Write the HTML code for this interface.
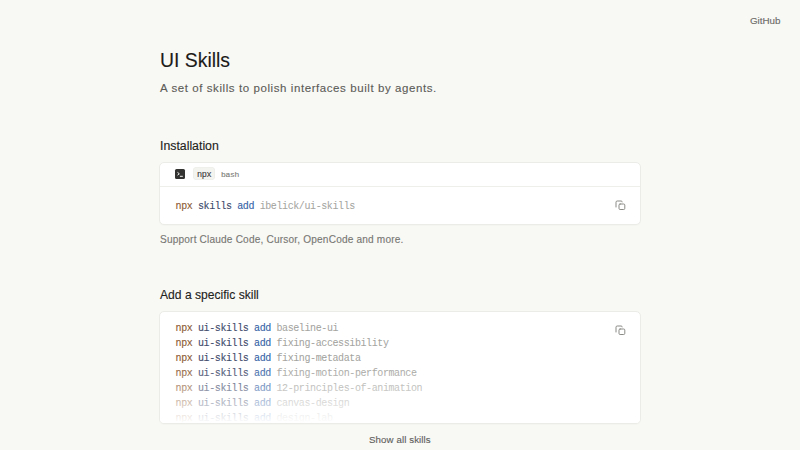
<!DOCTYPE html>
<html>
<head>
<meta charset="utf-8">
<style>
*{margin:0;padding:0;box-sizing:border-box}
html,body{width:800px;height:450px;overflow:hidden;background:#f8f8f5}
body{font-family:"Liberation Sans",sans-serif;color:#1c1c1a;position:relative;-webkit-text-stroke:.12px}
.t{position:absolute;white-space:nowrap;line-height:1}
.mono{font-family:"Liberation Mono",monospace}
.gh{left:750px;top:16px;font-size:9.8px;color:#6b6b66}
.title{left:160px;top:50.5px;font-size:19.4px;color:#1c1b18}
.sub{left:160px;top:83px;font-size:11.5px;letter-spacing:.58px;color:#5c5c57}
.h2{font-size:12.3px;color:#232320}
.card{position:absolute;left:159px;width:482px;background:#fff;border:1px solid #ebebe7;border-radius:5px;overflow:hidden;box-shadow:0 1px 1px rgba(0,0,0,.02)}
.hdr{position:absolute;left:0;top:0;width:100%;height:24px;border-bottom:1px solid #eeeeea}
.term{position:absolute;left:15px;top:6px;width:10px;height:10.4px;background:#333331;border-radius:1.5px}
.pill{position:absolute;left:33px;top:4px;width:22px;height:13px;border-radius:4px;background:#f3f3f0;box-shadow:inset 0 0 0 .6px #ebebe7}
.code{font-size:10px;letter-spacing:-.4px;-webkit-text-stroke:.12px}
.n{color:#8c5a34}.s{color:#3c496a}.a{color:#3562a6}.g{color:#a4a4a0;-webkit-text-stroke:.05px}
.copy{position:absolute;width:12px;height:12px}
.note{left:160px;top:234.5px;font-size:10.1px;letter-spacing:.18px;color:#777772}
.show{left:369px;top:434.8px;font-size:9.7px;letter-spacing:.1px;color:#60605b}
.fade{position:absolute;left:0;right:0;bottom:0;height:58px;background:linear-gradient(to bottom,rgba(255,255,255,0) 0%,rgba(255,255,255,.35) 38%,rgba(255,255,255,.6) 64%,rgba(255,255,255,.88) 90%,#fff 100%)}
</style>
</head>
<body>
<div class="t gh">GitHub</div>
<div class="t title">UI Skills</div>
<div class="t sub">A set of skills to polish interfaces built by agents.</div>
<div class="t h2" style="left:160px;top:140px">Installation</div>
<div class="card" style="top:162px;height:63px">
  <div class="hdr">
    <div class="term"><svg width="10" height="10" viewBox="0 0 10 10" style="position:absolute;left:0;top:0"><path d="M2.5 3.4 L4.3 4.8 L2.5 6.2" stroke="#fff" stroke-width=".95" fill="none"/><path d="M4.9 7.3 H7.8" stroke="#fff" stroke-width=".95"/></svg></div>
    <div class="pill"></div>
    <div class="t mono" style="left:37px;top:8px;font-size:8.5px;letter-spacing:-.3px;color:#3a3a38">npx</div>
    <div class="t mono" style="left:61px;top:8px;font-size:8px;letter-spacing:-.3px;color:#7c7c78">bash</div>
  </div>
  <div class="t mono code" style="left:15.6px;top:39px"><span class="n">npx</span> <span class="s">skills</span> <span class="a">add</span> <span class="g">ibelick/ui-skills</span></div>
  <svg class="copy" style="left:454.5px;top:37.4px" width="12" height="12" viewBox="-1 -1 12 12" fill="none" stroke="#8a8a86" stroke-width="1" stroke-linecap="round"><path d="M0 6 V1.2 Q0 0 1.2 0 H5.2 Q6.2 0 6.2 .9"/><rect x="3" y="3" width="5.8" height="5.5" rx="1.1"/></svg>
</div>
<div class="t note">Support Claude Code, Cursor, OpenCode and more.</div>
<div class="t h2" style="left:160px;top:289.2px;font-size:12.1px">Add a specific skill</div>
<div class="card" style="top:311px;height:113px">
  <div class="t mono code" style="left:15.6px;top:9px;line-height:15px">
    <div><span class="n">npx</span> <span class="s">ui-skills</span> <span class="a">add</span> <span class="g">baseline-ui</span></div>
    <div><span class="n">npx</span> <span class="s">ui-skills</span> <span class="a">add</span> <span class="g">fixing-accessibility</span></div>
    <div><span class="n">npx</span> <span class="s">ui-skills</span> <span class="a">add</span> <span class="g">fixing-metadata</span></div>
    <div><span class="n">npx</span> <span class="s">ui-skills</span> <span class="a">add</span> <span class="g">fixing-motion-performance</span></div>
    <div><span class="n">npx</span> <span class="s">ui-skills</span> <span class="a">add</span> <span class="g">12-principles-of-animation</span></div>
    <div><span class="n">npx</span> <span class="s">ui-skills</span> <span class="a">add</span> <span class="g">canvas-design</span></div>
    <div><span class="n">npx</span> <span class="s">ui-skills</span> <span class="a">add</span> <span class="g">design-lab</span></div>
  </div>
  <div class="fade"></div>
  <svg class="copy" style="left:454.6px;top:12.6px" width="12" height="12" viewBox="-1 -1 12 12" fill="none" stroke="#8a8a86" stroke-width="1" stroke-linecap="round"><path d="M0 6 V1.2 Q0 0 1.2 0 H5.2 Q6.2 0 6.2 .9"/><rect x="3" y="3" width="5.8" height="5.5" rx="1.1"/></svg>
</div>
<div class="t show">Show all skills</div>
</body>
</html>
